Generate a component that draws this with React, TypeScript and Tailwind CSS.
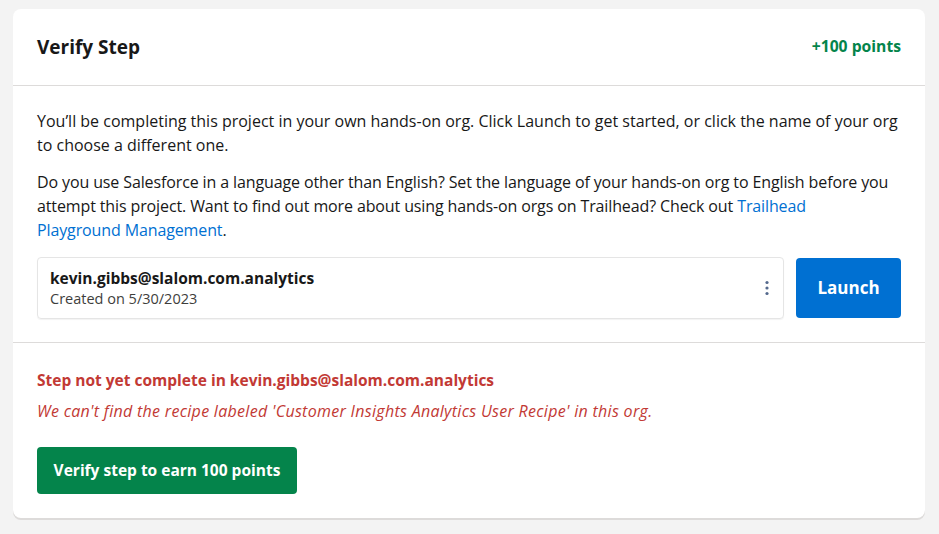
import React from "react";

export default function App() {
  return (
    <div className="min-h-[534px] w-full bg-[#f3f3f3] pt-[9px] pl-[13px]" style={{ fontFamily: "'Open Sans', Lato, sans-serif" }}>
      <div className="w-[912px] rounded-[8px] bg-white shadow-[0_2px_0_0_#dddbda]">
        <div className="flex h-[77px] items-center justify-between border-b border-[#dddbda] px-[24px]">
          <h2 className="text-[19px] font-bold text-[#181818]">Verify Step</h2>
          <span className="text-[15.7px] font-bold text-[#04844b]">+100 points</span>
        </div>
        <div className="border-b border-[#dddbda] px-[24px] pt-[23px] pb-[23px] text-[16px] leading-[24px] text-[#181818]">
          <p>You’ll be completing this project in your own hands-on org. Click Launch to get started, or click the name of your org to choose a different one.</p>
          <p className="mt-[13px] tracking-[-0.12px]">
            Do you use Salesforce in a language other than English? Set the language of your hands-on org to English before you attempt this project. Want to find out more about using hands-on orgs on Trailhead? Check out{" "}
            <a className="text-[#0070d2]">Trailhead<br />Playground Management</a>.
          </p>
          <div className="mt-[15px] flex gap-[12px]">
            <div className="flex h-[62px] flex-1 items-center justify-between rounded-[4px] border border-[#e5e5e5] pl-[12px] pr-[12px] shadow-[0_1px_1px_0_rgba(0,0,0,0.05)]">
              <div>
                <div className="text-[15.5px] font-bold leading-[20px] text-[#181818]">kevin.gibbs@slalom.com.analytics</div>
                <div className="text-[14.5px] leading-[21px] text-[#3e3e3c]">Created on 5/30/2023</div>
              </div>
              <svg width="4" height="16" viewBox="0 0 4 16" className="mr-[2px]">
                <circle cx="2" cy="2.5" r="1.6" fill="#54698d" />
                <circle cx="2" cy="8" r="1.6" fill="#54698d" />
                <circle cx="2" cy="13.5" r="1.6" fill="#54698d" />
              </svg>
            </div>
            <button className="mt-[1px] h-[60px] w-[105px] rounded-[4px] bg-[#0070d2] text-[17px] font-bold text-white">Launch</button>
          </div>
        </div>
        <div className="px-[24px] pt-[26px] pb-[24px]">
          <div className="text-[15.5px] font-bold leading-[22px] text-[#c23934]">Step not yet complete in kevin.gibbs@slalom.com.analytics</div>
          <div className="mt-[9px] text-[16px] italic leading-[22px] tracking-[0.3px] text-[#c23934]">We can't find the recipe labeled 'Customer Insights Analytics User Recipe' in this org.</div>
          <button className="mt-[25px] h-[47px] w-[260px] rounded-[4px] bg-[#04844b] text-[15.5px] font-bold text-white">Verify step to earn 100 points</button>
        </div>
      </div>
    </div>
  );
}
